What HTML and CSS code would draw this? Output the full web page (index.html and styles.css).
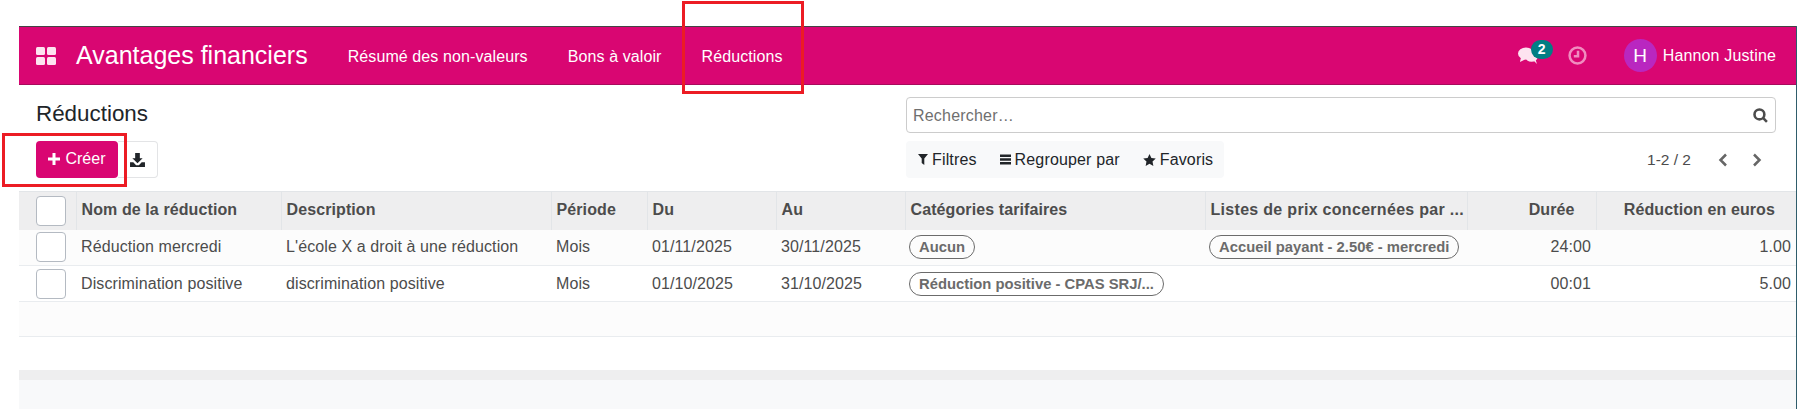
FILE: index.html
```html
<!DOCTYPE html>
<html lang="fr">
<head>
    <meta charset="UTF-8">
    <title>Réductions</title>
    <link rel="stylesheet" href="styles.css">
</head>
<body>
    <div class="app">
        <header class="navbar">
            <svg class="apps-icon" viewBox="0 0 20 18"><rect x="0" y="0" width="9" height="8" rx="1.5"/><rect x="11" y="0" width="9" height="8" rx="1.5"/><rect x="0" y="10" width="9" height="8" rx="1.5"/><rect x="11" y="10" width="9" height="8" rx="1.5"/></svg>
            <span class="brand">Avantages financiers</span>
            <nav class="menu">
                <a>Résumé des non-valeurs</a>
                <a>Bons à valoir</a>
                <a>Réductions</a>
            </nav>
            <div class="systray">
                <span class="chat">
                    <svg class="chat-icon" viewBox="0 0 20 17"><ellipse cx="8" cy="6.500" rx="8" ry="6"/><path d="M3 10 L2 15 L8 12 Z"/><ellipse cx="13.500" cy="10.500" rx="6" ry="4.200"/><path d="M15 13 L19 17 L17 11 Z"/></svg>
                    <span class="badge">2</span>
                </span>
                <svg class="clock-icon" viewBox="0 0 18 18"><circle cx="9" cy="9" r="7.500"/><path d="M9.500 4.500 V9.800 H5.500"/></svg>
                <span class="avatar">H</span>
                <span class="username">Hannon Justine</span>
            </div>
        </header>

        <section class="control">
            <div class="control-left">
                <h1>Réductions</h1>
                <div class="buttons">
                    <button class="btn-create"><svg class="plus-icon" viewBox="0 0 12 12"><path d="M4.500 0h3v4.500H12v3H7.500V12h-3V7.500H0v-3h4.500z"/></svg>Créer</button>
                    <button class="btn-export"><svg viewBox="0 0 16 15"><path d="M5.500 0h5v5.500h3L8 11 2.500 5.500h3z"/><path d="M0 10h3.500L6.500 13h3L12.500 10H16v5H0z"/></svg></button>
                </div>
            </div>
            <div class="control-right">
                <div class="search">
                    <span class="placeholder">Rechercher…</span>
                    <svg class="search-icon" viewBox="0 0 14 14"><circle cx="6" cy="6" r="4.600"/><path d="M9.300 9.300 L13 13"/></svg>
                </div>
                <div class="tools">
                    <div class="filters">
                        <span class="filter"><svg class="icon-funnel" viewBox="0 0 10 11"><path d="M0 0h10L6.300 4.500V11L3.700 9V4.500z"/></svg>Filtres</span>
                        <span class="filter"><svg class="icon-bars" viewBox="0 0 11 11"><path d="M0 0.500h11v2.400H0zM0 4.300h11v2.400H0zM0 8.100h11v2.400H0z"/></svg>Regrouper par</span>
                        <span class="filter"><svg class="icon-star" viewBox="0 0 12 11.500"><path d="M6 0l1.800 3.900 4.200.5-3.100 2.900.8 4.200L6 9.400l-3.700 2.100.8-4.200L0 4.400l4.200-.5z"/></svg>Favoris</span>
                    </div>
                    <div class="pager">
                        <span>1-2 / 2</span>
                        <svg class="chevron" viewBox="0 0 10 14"><path d="M8 1.500 L2.500 7 L8 12.500"/></svg>
                        <svg class="chevron" viewBox="0 0 10 14"><path d="M2 1.500 L7.500 7 L2 12.500"/></svg>
                    </div>
                </div>
            </div>
        </section>

        <table class="list">
            <colgroup>
                <col class="c-check"><col class="c-name"><col class="c-desc"><col class="c-period"><col class="c-from"><col class="c-to"><col class="c-cat"><col class="c-price"><col class="c-time"><col class="c-amount">
            </colgroup>
            <thead>
                <tr>
                    <th><span class="check"></span></th>
                    <th>Nom de la réduction</th>
                    <th>Description</th>
                    <th>Période</th>
                    <th>Du</th>
                    <th>Au</th>
                    <th>Catégories tarifaires</th>
                    <th class="wide-head">Listes de prix concernées par ...</th>
                    <th class="num">Durée</th>
                    <th class="num amount-head">Réduction en euros</th>
                </tr>
            </thead>
            <tbody>
                <tr>
                    <td><span class="check"></span></td>
                    <td>Réduction mercredi</td>
                    <td>L'école X a droit à une réduction</td>
                    <td>Mois</td>
                    <td>01/11/2025</td>
                    <td>30/11/2025</td>
                    <td><span class="tag">Aucun</span></td>
                    <td><span class="tag">Accueil payant - 2.50€ - mercredi</span></td>
                    <td class="num">24:00</td>
                    <td class="num">1.00</td>
                </tr>
                <tr>
                    <td><span class="check"></span></td>
                    <td>Discrimination positive</td>
                    <td>discrimination positive</td>
                    <td>Mois</td>
                    <td>01/10/2025</td>
                    <td>31/10/2025</td>
                    <td><span class="tag">Réduction positive - CPAS SRJ/...</span></td>
                    <td></td>
                    <td class="num">00:01</td>
                    <td class="num">5.00</td>
                </tr>
                <tr class="empty">
                    <td colspan="10"></td>
                </tr>
            </tbody>
        </table>
        <div class="list-end"></div>
    </div>

    <div class="mark mark-nav"></div>
    <div class="mark mark-create"></div>
</body>
</html>
```

FILE: styles.css
```css
* {
    box-sizing: border-box;
}
html, body {
    height: 100%;
}
body {
    margin: 0;
    padding: 26px 0 0 19px;
    background-color: #fff;
    font-family: "Liberation Sans", Arial, sans-serif;
    font-size: 16px;
    color: #4c4c4c;
    overflow: hidden;
}
.app {
    height: 383px;
    display: flex;
    flex-direction: column;
    border-right: 1px solid #2f5d6b;
}

/* top bar */
.navbar {
    height: 59px;
    flex: none;
    display: flex;
    align-items: center;
    padding: 0 20px 0 17px;
    background-color: #d90672;
    border-top: 1px solid #444;
    border-bottom: 1px solid #a80a5c;
    color: #fff;
}
.apps-icon {
    width: 20px;
    height: 18px;
    fill: #fde3f0;
}
.brand {
    margin-left: 20px;
    font-size: 25px;
}
.menu {
    display: flex;
    gap: 40px;
    margin-left: 40px;
    padding-top: 2px;
    font-size: 16px;
    letter-spacing: 0.1px;
}
.systray {
    margin-left: auto;
    display: flex;
    align-items: center;
}
.chat {
    position: relative;
    width: 35px;
    height: 32px;
}
.chat-icon {
    position: absolute;
    left: 0;
    top: 7px;
    width: 20px;
    height: 17px;
    fill: #fde3f0;
}
.badge {
    position: absolute;
    left: 13px;
    top: 0;
    width: 22px;
    height: 19px;
    border-radius: 10px;
    background-color: #017e84;
    color: #fff;
    font-size: 14px;
    font-weight: bold;
    line-height: 19px;
    text-align: center;
}
.clock-icon {
    width: 19px;
    height: 19px;
    margin-left: 15px;
    fill: none;
    stroke: #f08cbf;
    stroke-width: 2.400;
}
.avatar {
    width: 33px;
    height: 33px;
    margin-left: 37px;
    border-radius: 50%;
    background-color: #b927c0;
    font-size: 19px;
    line-height: 33px;
    text-align: center;
}
.username {
    margin-left: 6px;
    font-size: 16px;
    letter-spacing: 0.15px;
}

/* title, search and tools */
.control {
    height: 106px;
    flex: none;
    display: flex;
    justify-content: space-between;
    padding-left: 17px;
}
h1 {
    margin: 14px 0 0;
    height: 42px;
    font-size: 22.400px;
    font-weight: normal;
    line-height: 30px;
    color: #212529;
}
.buttons {
    display: flex;
}
button {
    height: 37px;
    padding: 0;
    display: flex;
    align-items: center;
    justify-content: center;
    font-family: inherit;
    font-size: 16px;
    border: none;
    border-radius: 4px;
}
.btn-create {
    width: 82px;
    padding-bottom: 1px;
    background-color: #d90672;
    color: #fff;
}
.plus-icon {
    width: 12px;
    height: 12px;
    margin-right: 5px;
    fill: #fff;
}
.btn-export {
    width: 40px;
    background-color: #fff;
    border: 1px solid #e3e4e6;
    border-left: none;
    border-radius: 0 4px 4px 0;
}
.btn-export svg {
    width: 15px;
    height: 14px;
    fill: #212529;
}
.control-right {
    width: 870px;
    margin-right: 20px;
    padding-top: 12px;
}
.search {
    height: 36px;
    display: flex;
    align-items: center;
    justify-content: space-between;
    padding: 0 7px 0 6px;
    border: 1px solid #ccc;
    border-radius: 4px;
}
.placeholder {
    padding-top: 2px;
    letter-spacing: 0.2px;
    color: #6f6f6f;
}
.search-icon {
    width: 15px;
    height: 15px;
    fill: none;
    stroke: #4c4c4c;
    stroke-width: 2.400;
}
.tools {
    margin-top: 8px;
    display: flex;
    justify-content: space-between;
    align-items: center;
}
.filters {
    width: 318px;
    height: 37px;
    display: flex;
    align-items: center;
    gap: 23px;
    padding-left: 12px;
    background-color: #f8f9fa;
    border-radius: 4px;
    color: #212529;
    letter-spacing: 0.15px;
}
.filter {
    display: flex;
    align-items: center;
    gap: 4px;
}
.filter svg {
    fill: #212529;
}
.icon-funnel {
    width: 10px;
    height: 11px;
}
.icon-bars {
    width: 11px;
    height: 11px;
}
.icon-star {
    width: 13px;
    height: 12px;
}
.pager {
    display: flex;
    align-items: center;
    font-size: 15.500px;
    color: #4c4c4c;
}
.chevron {
    width: 10px;
    height: 14px;
    margin-left: 24px;
    fill: none;
    stroke: #666;
    stroke-width: 2.500;
}
.pager .chevron:first-of-type {
    margin-left: 27px;
}
.pager .chevron:last-of-type {
    margin-right: 14px;
}

/* list */
.list {
    width: 1777px;
    flex: none;
    table-layout: fixed;
    border-collapse: collapse;
    letter-spacing: 0.1px;
}
.c-check { width: 57px; }
.c-name { width: 205px; }
.c-desc { width: 270px; }
.c-period { width: 96px; }
.c-from { width: 129px; }
.c-to { width: 129px; }
.c-cat { width: 300px; }
.c-price { width: 262px; }
.c-time { width: 129px; }
.c-amount { width: 200px; }
th {
    height: 38px;
    padding: 0 5px 1px;
    background-color: #eeeeef;
    border-top: 1px solid #e2e5e8;
    border-right: 1px solid #e2e5e8;
    text-align: left;
    font-weight: bold;
    white-space: nowrap;
}
.wide-head {
    letter-spacing: 0.3px;
}
td {
    height: 36px;
    padding: 0 5px;
    background-color: #fff;
    border-bottom: 1px solid #e9ecef;
    white-space: nowrap;
}
tbody tr:first-child td {
    background-color: #fcfcfc;
}
.empty td {
    height: 35px;
    background-color: #fcfcfc;
}
th:first-child, td:first-child {
    padding: 0 0 0 17px;
}
.num {
    text-align: right;
}
th.num {
    padding-right: 21px;
}
.amount-head {
    border-right: none;
}
.check {
    display: block;
    width: 30px;
    height: 30px;
    background-color: #fff;
    border: 1px solid #b4bac2;
    border-radius: 4px;
}
.tag {
    display: inline-block;
    max-width: 100%;
    height: 24px;
    margin-left: -1px;
    padding: 0 9px;
    border: 1px solid #6b6b6b;
    border-radius: 12px;
    font-size: 14.800px;
    font-weight: bold;
    letter-spacing: 0;
    line-height: 22px;
    color: #6b6b6b;
    vertical-align: middle;
}
.list-end {
    flex: 1;
    margin-top: 33px;
    background-color: #f8f9fa;
    border-top: 10px solid #eeeeef;
}

/* red marks drawn over the screenshot */
.mark {
    position: absolute;
    border: 3px solid #ec1c24;
}
.mark-nav {
    left: 682px;
    top: 1px;
    width: 122px;
    height: 93px;
}
.mark-create {
    left: 2px;
    top: 133px;
    width: 125px;
    height: 54px;
}
```
